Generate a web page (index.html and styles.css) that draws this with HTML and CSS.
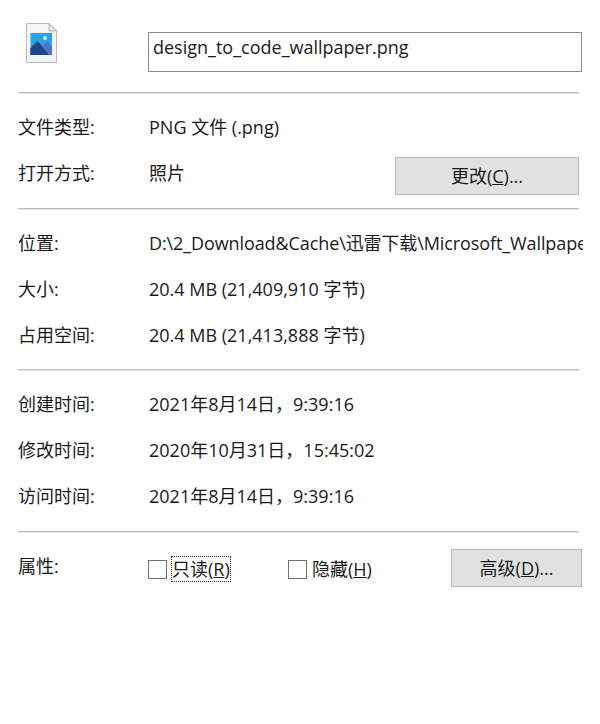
FILE: index.html
```html
<!DOCTYPE html>
<html lang="zh-CN">
<head>
  <meta charset="UTF-8">
  <title>design_to_code_wallpaper.png 属性</title>
  <link rel="stylesheet" href="styles.css">
</head>
<body>
  <div class="header">
    <svg class="file-icon" width="32" height="42" viewBox="0 0 32 42">
      <path d="M.5.5H23L30.5 8V39.5H.5Z" fill="#f3f5f9" stroke="#b4b8bd"/>
      <path d="M23 .5V8H30.5Z" fill="#e4e6e9" stroke="#b4b8bd"/>
      <rect x="4.5" y="10" width="21.5" height="22" fill="#2aa3e6"/>
      <path d="M4.5 32V25L11.5 18L17 23L21 18L26 24V32Z" fill="#5470cf"/>
      <path d="M4.5 32V25L11.5 18L23 32Z" fill="#1d4688"/>
      <circle cx="19" cy="15" r="2" fill="#d5eefb"/>
    </svg>
    <div class="name-box">design_to_code_wallpaper.png</div>
  </div>

  <hr>

  <div class="section section-type">
    <div class="row"><span class="label">文件类型:</span><span class="value">PNG 文件 (.png)</span></div>
    <div class="row">
      <span class="label">打开方式:</span><span class="value">照片</span>
      <button class="btn btn-change">更改(<u>C</u>)...</button>
    </div>
  </div>

  <hr>

  <div class="section section-place">
    <div class="row"><span class="label">位置:</span><span class="value path">D:\2_Download&amp;Cache\迅雷下载\Microsoft_Wallpaper</span></div>
    <div class="row"><span class="label">大小:</span><span class="value">20.4 MB (21,409,910 字节)</span></div>
    <div class="row"><span class="label">占用空间:</span><span class="value">20.4 MB (21,413,888 字节)</span></div>
  </div>

  <hr>

  <div class="section section-time">
    <div class="row"><span class="label">创建时间:</span><span class="value">2021年8月14日，9:39:16</span></div>
    <div class="row"><span class="label">修改时间:</span><span class="value">2020年10月31日，15:45:02</span></div>
    <div class="row"><span class="label">访问时间:</span><span class="value">2021年8月14日，9:39:16</span></div>
  </div>

  <hr>

  <div class="attrs">
    <span class="label attrs-label">属性:</span>
    <label class="check check-focus"><span class="box"></span><span class="check-text">只读(<u>R</u>)</span></label>
    <label class="check"><span class="box"></span><span class="check-text">隐藏(<u>H</u>)</span></label>
    <button class="btn btn-advanced">高级(<u>D</u>)...</button>
  </div>
</body>
</html>
```

FILE: styles.css
```css
body {
  margin: 0;
  padding: 0 21px 0 18px;
  background: #fff;
  color: #1a1a1a;
  font-family: "Open Sans", "Noto Sans CJK SC", sans-serif;
  font-size: 18px;
  line-height: 24px;
}
hr {
  height: 1px;
  margin: 0;
  border: none;
  border-bottom: 1px solid #e6e6e6;
  background: #bdbdbd;
}
.header {
  display: flex;
  align-items: flex-start;
  height: 92px;
}
.file-icon {
  margin: 23px 0 0 8px;
}
.name-box {
  box-sizing: border-box;
  width: 434px;
  height: 40px;
  margin: 32px -3px 0 90px;
  padding: 2px 4px;
  border: 1px solid #8a8a8a;
  white-space: nowrap;
}
.section {
  box-sizing: border-box;
  padding-top: 21px;
}
.section-type {
  height: 114px;
}
.section-place {
  height: 159px;
}
.section-time {
  height: 160px;
}
.row {
  position: relative;
  display: flex;
  height: 46px;
}
.label {
  flex: none;
  width: 131px;
}
.value {
  white-space: nowrap;
}
.path {
  flex: none;
  width: 434px;
  overflow: hidden;
  letter-spacing: -0.1px;
}
.btn {
  height: 38px;
  padding: 0;
  border: 1px solid #b4b4b4;
  background: #e1e1e1;
  color: #1a1a1a;
  font: inherit;
}
.btn-change {
  position: absolute;
  right: 0;
  top: -4px;
  width: 184px;
}
.attrs {
  display: flex;
  align-items: flex-start;
  height: 60px;
  padding-top: 16px;
}
.attrs-label {
  width: 130px;
  margin-top: 5px;
}
.check {
  display: flex;
  align-items: center;
  height: 26px;
  margin-top: 7px;
}
.check-focus {
  width: 140px;
}
.box {
  box-sizing: border-box;
  width: 19px;
  height: 19px;
  margin-right: 5px;
  border: 1px solid #707070;
}
.check-focus .check-text {
  outline: 1px dotted #333;
}
.btn-advanced {
  width: 131px;
  margin: 0 -3px 0 auto;
}
```
